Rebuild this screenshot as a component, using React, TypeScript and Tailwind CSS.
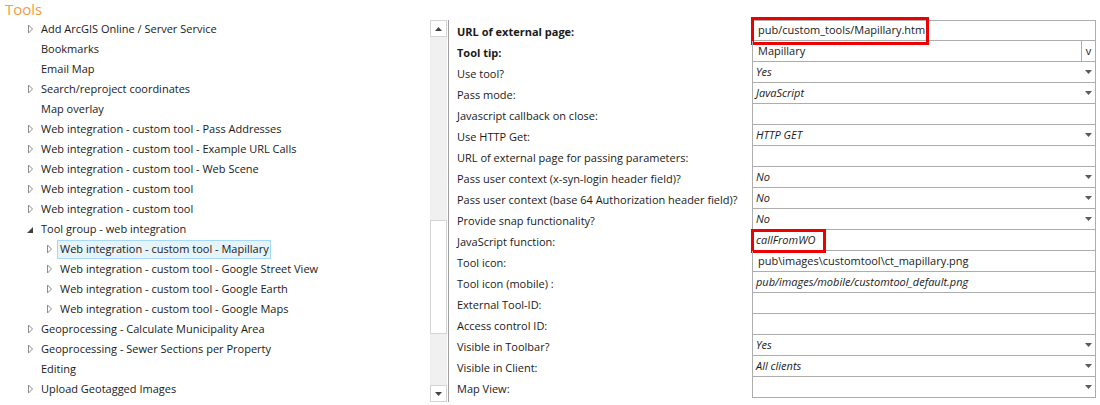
import React from "react"

type TreeItem = {
  label: string
  level: number
  icon: "closed" | "open" | "none"
  selected?: boolean
}

const treeItems: TreeItem[] = [
  { label: "Add ArcGIS Online / Server Service", level: 0, icon: "closed" },
  { label: "Bookmarks", level: 0, icon: "none" },
  { label: "Email Map", level: 0, icon: "none" },
  { label: "Search/reproject coordinates", level: 0, icon: "closed" },
  { label: "Map overlay", level: 0, icon: "none" },
  { label: "Web integration - custom tool - Pass Addresses", level: 0, icon: "closed" },
  { label: "Web integration - custom tool - Example URL Calls", level: 0, icon: "closed" },
  { label: "Web integration - custom tool - Web Scene", level: 0, icon: "closed" },
  { label: "Web integration - custom tool", level: 0, icon: "closed" },
  { label: "Web integration - custom tool", level: 0, icon: "closed" },
  { label: "Tool group - web integration", level: 0, icon: "open" },
  { label: "Web integration - custom tool - Mapillary", level: 1, icon: "closed", selected: true },
  { label: "Web integration - custom tool - Google Street View", level: 1, icon: "closed" },
  { label: "Web integration - custom tool - Google Earth", level: 1, icon: "closed" },
  { label: "Web integration - custom tool - Google Maps", level: 1, icon: "closed" },
  { label: "Geoprocessing - Calculate Municipality Area", level: 0, icon: "closed" },
  { label: "Geoprocessing - Sewer Sections per Property", level: 0, icon: "closed" },
  { label: "Editing", level: 0, icon: "none" },
  { label: "Upload Geotagged Images", level: 0, icon: "closed" },
]

type Prop = {
  label: string
  bold?: boolean
  value?: string
  italic?: boolean
  kind: "text" | "select" | "tip"
  mark?: "url" | "fn"
}

const props: Prop[] = [
  { label: "URL of external page:", bold: true, value: "pub/custom_tools/Mapillary.htm", kind: "text", mark: "url" },
  { label: "Tool tip:", bold: true, value: "Mapillary", kind: "tip" },
  { label: "Use tool?", value: "Yes", italic: true, kind: "select" },
  { label: "Pass mode:", value: "JavaScript", italic: true, kind: "select" },
  { label: "Javascript callback on close:", kind: "text" },
  { label: "Use HTTP Get:", value: "HTTP GET", italic: true, kind: "select" },
  { label: "URL of external page for passing parameters:", kind: "text" },
  { label: "Pass user context (x-syn-login header field)?", value: "No", italic: true, kind: "select" },
  { label: "Pass user context (base 64 Authorization header field)?", value: "No", italic: true, kind: "select" },
  { label: "Provide snap functionality?", value: "No", italic: true, kind: "select" },
  { label: "JavaScript function:", value: "callFromWO", italic: true, kind: "text", mark: "fn" },
  { label: "Tool icon:", value: "pub\\images\\customtool\\ct_mapillary.png", kind: "text" },
  { label: "Tool icon (mobile) :", value: "pub/images/mobile/customtool_default.png", italic: true, kind: "text" },
  { label: "External Tool-ID:", kind: "text" },
  { label: "Access control ID:", kind: "text" },
  { label: "Visible in Toolbar?", value: "Yes", italic: true, kind: "select" },
  { label: "Visible in Client:", value: "All clients", italic: true, kind: "select" },
  { label: "Map View:", kind: "select" },
]

const Arrow = ({ icon }: { icon: TreeItem["icon"] }) => {
  if (icon === "closed") {
    return (
      <svg width="7" height="10" viewBox="0 0 7 10" className="block">
        <path d="M1.5 1 L5.5 5 L1.5 9 Z" fill="none" stroke="#8c8c8c" strokeWidth="1" />
      </svg>
    )
  }
  if (icon === "open") {
    return (
      <svg width="7" height="10" viewBox="0 0 7 10" className="block">
        <path d="M6 3 L6 9 L0 9 Z" fill="#404040" />
      </svg>
    )
  }
  return null
}

const Caret = () => (
  <svg width="7" height="4" viewBox="0 0 7 4" className="block">
    <path d="M0 0 L7 0 L3.5 4 Z" fill="#5a5a5a" />
  </svg>
)

const App: React.FC = () => {
  return (
    <div className="w-[1100px] h-[405px] bg-white overflow-hidden flex font-['Open_Sans',sans-serif] text-[11px] text-[#1a1a1a]">
      {/* tree */}
      <div className="w-[430px] shrink-0">
        <div className="h-[19px] pl-[5px] text-[15px] leading-[19px] text-[#f39a45]">Tools</div>
        {treeItems.map((item, idx) => (
          <div
            key={idx}
            className={`h-5 flex items-center ${item.level === 1 ? "pl-[46px]" : "pl-[27px]"}`}
          >
            <div className="w-[11px] shrink-0 flex items-center">
              <Arrow icon={item.icon} />
            </div>
            <div
              className={
                item.selected
                  ? "h-[19px] w-[214px] flex items-center pl-[2px] bg-[#e5f3fb] border border-[#a8d8f8] whitespace-nowrap"
                  : "ml-[3px] whitespace-nowrap leading-5"
              }
            >
              {item.label}
            </div>
          </div>
        ))}
      </div>

      {/* scrollbar */}
      <div className="mt-5 w-[17px] h-[382px] shrink-0 bg-[#f0f0f0] flex flex-col">
        <div className="h-[17px] bg-white border border-[#d4d4d4] flex items-center justify-center">
          <svg width="7" height="4" viewBox="0 0 7 4">
            <path d="M0 4 L7 4 L3.5 0 Z" fill="#444" />
          </svg>
        </div>
        <div className="h-[183px]" />
        <div className="h-[114px] bg-white border border-[#d4d4d4]" />
        <div className="flex-1" />
        <div className="h-[17px] bg-white border border-[#d4d4d4] flex items-center justify-center">
          <svg width="7" height="4" viewBox="0 0 7 4">
            <path d="M0 0 L7 0 L3.5 4 Z" fill="#444" />
          </svg>
        </div>
      </div>

      {/* property grid */}
      <div className="mt-5 ml-px h-[382px] border-l border-[#a0a0a0] flex flex-col">
        {props.map((p, idx) => (
          <div key={idx} className="h-[21px] flex">
            <div
              className={`w-[303px] pl-2 pt-[3px] flex items-center whitespace-nowrap ${p.bold ? "font-bold" : ""}`}
            >
              {p.label}
            </div>
            <div
              className={`relative w-[344px] flex items-center border-x border-b border-[#adadad] ${
                idx === 0 ? "border-t" : ""
              }`}
            >
              <div className={`flex-1 whitespace-nowrap ${p.italic ? "italic pl-[3px]" : "pl-[5px]"}`}>
                {p.value}
              </div>
              {p.kind === "select" && (
                <div className="pr-[3px]">
                  <Caret />
                </div>
              )}
              {p.kind === "tip" && (
                <div className="w-[14px] h-full border-l border-[#adadad] flex items-center justify-center text-[11px]">
                  v
                </div>
              )}
              {p.mark === "url" && (
                <div className="absolute left-[-2px] top-[-4px] w-[178px] h-[28px] border-[3px] border-[#ec0000]" />
              )}
              {p.mark === "fn" && (
                <div className="absolute left-[-2px] top-[-1px] w-[75px] h-[24px] border-[3px] border-[#ec0000]" />
              )}
            </div>
          </div>
        ))}
      </div>
    </div>
  )
}

export default App
